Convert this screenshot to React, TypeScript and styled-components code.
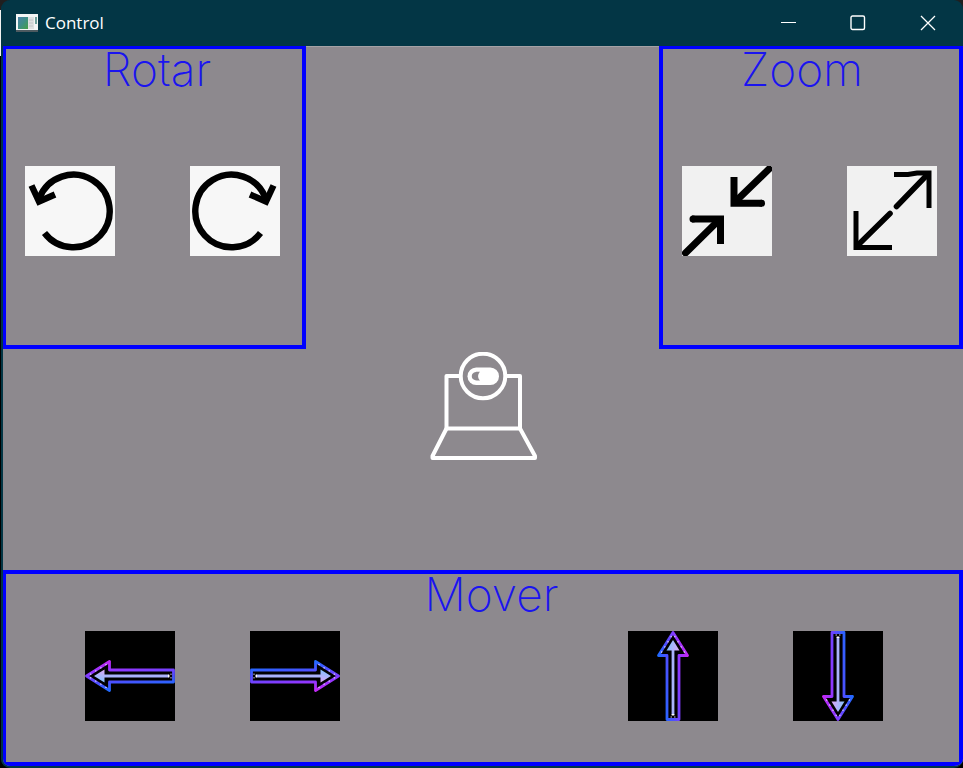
import React from "react";
import styled, { createGlobalStyle } from "styled-components";

const GlobalStyle = createGlobalStyle`
  * { box-sizing: border-box; }
  html { background: linear-gradient(#201f1f 10px, #f2f2f2 10px, #f2f2f2 56px, #000 56px) no-repeat #000; }
  body { margin: 0; }
`;

const Window = styled.div`
  display: flex;
  flex-direction: column;
  min-height: 100vh;
  margin-left: 1px;
  border: 0 solid #033645;
  border-width: 0 0 2px 2px;
  border-radius: 9px;
  background: #033645;
  overflow: hidden;
`;

const TitleBar = styled.header`
  display: flex;
  align-items: center;
  height: 46px;
  padding-left: 13px;
  color: #fff;
`;

const Title = styled.h1`
  flex: 1;
  margin: 0 0 0 7px;
  font: 400 17px/24px "Open Sans", "Noto Sans", sans-serif;
`;

const CaptionButton = styled.button`
  display: grid;
  place-items: center;
  width: 70px;
  height: 46px;
  padding: 0;
  border: 0;
  background: none;
  color: inherit;
`;

const Canvas = styled.main`
  flex: 1;
  display: grid;
  grid-template-columns: 303px 1fr 304px;
  grid-template-rows: 303px 1fr 196px;
  background: #8d898e;
  box-shadow: inset 0 1px #a5a2a6;
`;

const Panel = styled.section<{ $wide?: boolean; $edge: string }>`
  grid-column: ${(p) => (p.$wide ? "1 / -1" : "auto")};
  display: flex;
  flex-direction: column;
  border: solid #0000ff;
  border-width: ${(p) => p.$edge};
`;

const PanelTitle = styled.h2<{ $inset: string }>`
  margin: 0;
  padding: ${(p) => p.$inset};
  color: #1a14f0;
  text-align: center;
  font: 200 46px/40px Inter, sans-serif;
`;

const Controls = styled.div<{ $inset: string }>`
  display: flex;
  justify-content: space-between;
  padding: ${(p) => p.$inset};
`;

const Pair = styled.div`
  display: flex;
  gap: 75px;
`;

const Tile = styled.button<{ $fill: string }>`
  display: block;
  width: 90px;
  height: 90px;
  padding: 0;
  border: 0;
  background: ${(p) => p.$fill};
  svg { display: block; }
`;

const Center = styled.div`
  grid-column: 1 / -1;
  display: flex;
  justify-content: center;
  align-items: flex-start;
  padding: 3px 0 0 2px;
`;

const AppIcon = () => (
  <svg width="22" height="18" viewBox="0 0 22 18" aria-hidden="true">
    <defs>
      <linearGradient id="app" x1="0" y1="0" x2="1" y2="1">
        <stop offset="0" stopColor="#4d80a8" />
        <stop offset="0.5" stopColor="#3e8f86" />
        <stop offset="1" stopColor="#45a045" />
      </linearGradient>
    </defs>
    <path d="M0 16h22v2H0z" fill="#4d5a60" />
    <path d="M0 0h22v16H0z" fill="#f4f6f6" />
    <path d="M2 3h10v12H2z" fill="url(#app)" />
    <path d="M12 3h6v12h-6z" fill="#dfe1e1" />
    <path d="M13 6h4M13 9h4M13 12h4" stroke="#c3c6c8" />
    <path d="M19 3h2v7h-2z" fill="#6d9e98" />
  </svg>
);

const Rotate = ({ mirror = false }: { mirror?: boolean }) => (
  <svg width="90" height="90" viewBox="0 0 90 90" fill="none" stroke="#000" strokeWidth="6.4">
    <g transform={mirror ? "matrix(-1 0 0 1 90 0)" : undefined}>
      <path d="M19.5 67A36.300 36.300 0 1 0 14.500 32" />
      <path d="M6.500 19.500L14 35.500L30 28.500" />
    </g>
  </svg>
);

const Shrink = () => (
  <svg width="90" height="90" viewBox="0 0 90 90" fill="none" stroke="#000" strokeWidth="7">
    <path d="M87 3L53 36M3.500 87L37 54" strokeLinecap="round" />
    <path d="M52 11V37.200H80M10 53H38.500V78" />
    <circle cx="79.500" cy="37.200" r="3.500" fill="#000" stroke="none" />
    <circle cx="11" cy="53" r="3.500" fill="#000" stroke="none" />
  </svg>
);

const Expand = () => (
  <svg width="90" height="90" viewBox="0 0 90 90" fill="none" stroke="#000" strokeWidth="5">
    <path d="M49.500 40.500L80 9M43 47.500L10 80" strokeWidth="5.600" strokeLinecap="round" />
    <path d="M47 8.500H61L70 7H82V42M9 45V81.500H45" />
  </svg>
);

const Arrow = ({ turn }: { turn: number }) => (
  <svg width="90" height="90" viewBox="0 0 90 90" fill="none">
    <defs>
      <linearGradient id={`edge${turn}`} gradientUnits="userSpaceOnUse" x1="25" y1="30" x2="28" y2="60">
        <stop offset="0" stopColor="#c328f5" />
        <stop offset="0.35" stopColor="#8c38ff" />
        <stop offset="0.7" stopColor="#4c50ff" />
        <stop offset="1" stopColor="#1e6cff" />
      </linearGradient>
      <linearGradient id={`head${turn}`} x1="0.6" y1="0" x2="0.4" y2="1">
        <stop offset="0" stopColor="#d8a8f6" />
        <stop offset="1" stopColor="#7cc4ff" />
      </linearGradient>
    </defs>
    <g transform={`rotate(${turn} 45 45)`}>
      <path d="M1.500 45L24.500 30.500V39H88.500V51H24.500V59.500Z" stroke={`url(#edge${turn})`} strokeWidth="2.800" strokeLinejoin="round" />
      <path d="M5 43.500L22 33M5 46.500L22 57" stroke="#d9cdf2" strokeWidth="1.200" strokeDasharray="1.500 4.500" />
      <path d="M86 42.500v1.500M86 46v1.500" stroke="#c9c4e6" />
      <path d="M18 45H84" stroke="#a9b2fb" strokeWidth="2.800" />
      <path d="M83 45h1.500" stroke="#fff" strokeWidth="2.600" />
      <path d="M9 45L19.500 38.500V51.500Z" fill={`url(#head${turn})`} />
    </g>
  </svg>
);

const Laptop = () => (
  <svg width="108" height="110" viewBox="0 0 108 110" fill="none" stroke="#fff" strokeWidth="4" role="img" aria-label="Webcam">
    <circle cx="53" cy="24" r="22.300" />
    <path d="M31 24H16.500V76.500H90V24H75" strokeLinejoin="round" />
    <path d="M16.500 76.500L2.500 104V106H105V104L90 76.500" strokeLinejoin="round" />
    <rect x="37.500" y="15.500" width="31.500" height="17.500" rx="8.700" fill="#fff" stroke="none" />
    <path d="M50 19.800C44 19 41.800 21.500 41.800 24.200S44 28.800 50 28.400C47.500 26 47.500 22.500 50 19.800Z" fill="#8d898e" stroke="none" />
  </svg>
);

export default function App() {
  return (
    <>
      <GlobalStyle />
      <Window>
        <TitleBar>
          <AppIcon />
          <Title>Control</Title>
          <CaptionButton aria-label="Minimize">
            <svg width="16" height="16" stroke="#fff"><path d="M1 7.500h15" /></svg>
          </CaptionButton>
          <CaptionButton aria-label="Maximize">
            <svg width="16" height="16" fill="none" stroke="#fff" strokeWidth="1.400"><rect x="1" y="1" width="13.500" height="13.500" rx="1.500" /></svg>
          </CaptionButton>
          <CaptionButton aria-label="Close">
            <svg width="16" height="16" stroke="#fff" strokeWidth="1.300"><path d="M1 1l14 14M15 1L1 15" /></svg>
          </CaptionButton>
        </TitleBar>
        <Canvas>
          <Panel $edge="3px 4px 4px 3px">
            <PanelTitle $inset="0 0 0 6px">Rotar</PanelTitle>
            <Controls $inset="77px 19px 0">
              <Pair>
                <Tile $fill="#f7f7f7" aria-label="Rotar a la izquierda"><Rotate /></Tile>
                <Tile $fill="#f7f7f7" aria-label="Rotar a la derecha"><Rotate mirror /></Tile>
              </Pair>
            </Controls>
          </Panel>
          <div />
          <Panel $edge="3px 4px 4px 4px">
            <PanelTitle $inset="0 18px 0 0">Zoom</PanelTitle>
            <Controls $inset="77px 19px 0">
              <Pair>
                <Tile $fill="#f1f1f1" aria-label="Reducir"><Shrink /></Tile>
                <Tile $fill="#f1f1f1" aria-label="Ampliar"><Expand /></Tile>
              </Pair>
            </Controls>
          </Panel>
          <Center><Laptop /></Center>
          <Panel $wide $edge="4px 4px 4px 3px">
            <PanelTitle $inset="0 0 0 18px">Mover</PanelTitle>
            <Controls $inset="17px 76px 0 79px">
              <Pair>
                <Tile $fill="#000" aria-label="Mover a la izquierda"><Arrow turn={0} /></Tile>
                <Tile $fill="#000" aria-label="Mover a la derecha"><Arrow turn={180} /></Tile>
              </Pair>
              <Pair>
                <Tile $fill="#000" aria-label="Mover arriba"><Arrow turn={90} /></Tile>
                <Tile $fill="#000" aria-label="Mover abajo"><Arrow turn={270} /></Tile>
              </Pair>
            </Controls>
          </Panel>
        </Canvas>
      </Window>
    </>
  );
}
